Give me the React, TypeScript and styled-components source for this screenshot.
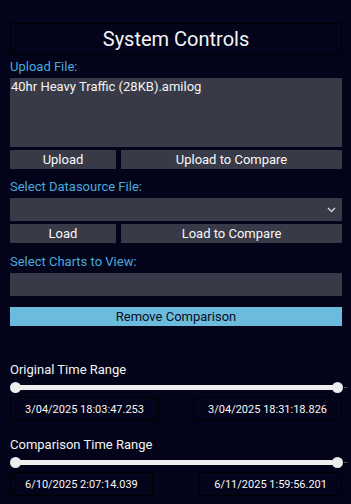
import styled, { createGlobalStyle } from "styled-components";

const GlobalStyle = createGlobalStyle`
  html, body {
    margin: 0;
    padding: 0;
    background-color: #03041a;
  }
  body {
    font-family: Roboto, "Liberation Sans", sans-serif;
    color: #f2f2f2;
  }
`;

const Panel = styled.div`
  width: 332px;
  padding: 23px 9px 0 10px;
  display: flex;
  flex-direction: column;
`;

const Title = styled.h2`
  margin: 0;
  height: 30px;
  border: 1px solid #000;
  display: flex;
  align-items: center;
  justify-content: center;
  font-size: 20px;
  font-weight: 400;
  color: #f4f4f4;
`;

const Label = styled.label<{ top?: number }>`
  display: block;
  font-size: 13px;
  line-height: 16px;
  color: #4aa9dd;
  margin-top: ${(p) => p.top ?? 4}px;
  margin-bottom: 3px;
`;

const FileBox = styled.div`
  height: 69px;
  background-color: #383a48;
  font-size: 13px;
  line-height: 16px;
  padding: 1px 1px;
  box-sizing: border-box;
  color: #f4f4f4;
`;

const ButtonRow = styled.div`
  display: grid;
  grid-template-columns: 106px 1fr;
  gap: 5px;
  margin-top: 3px;
`;

const Button = styled.button`
  height: 19px;
  padding: 0;
  border: none;
  background-color: #383a48;
  color: #f8f8f8;
  font-family: Roboto, "Liberation Sans", sans-serif;
  font-size: 13px;
  font-weight: 400;
  line-height: 19px;
`;

const SelectBox = styled.div`
  height: 23px;
  background-color: #383a48;
  display: flex;
  align-items: center;
  justify-content: flex-end;
  padding-right: 6px;
`;

const InputBox = styled.div`
  height: 23px;
  background-color: #383a48;
`;

const WideButton = styled.button`
  margin-top: 11px;
  height: 19px;
  padding: 0;
  border: none;
  background-color: #6bbcdc;
  color: #0a0c24;
  font-family: Roboto, "Liberation Sans", sans-serif;
  font-size: 13px;
  line-height: 19px;
`;

const RangeTitle = styled.div<{ top: number }>`
  margin-top: ${(p) => p.top}px;
  font-size: 13px;
  line-height: 16px;
  color: #f4f4f4;
`;

const Slider = styled.div`
  position: relative;
  margin-top: 4px;
  height: 11px;
  display: flex;
  align-items: center;
`;

const Track = styled.div`
  flex: 1;
  height: 5px;
  margin: 0 4px;
  background-color: #eeeeee;
`;

const Thumb = styled.div<{ side: "left" | "right" }>`
  position: absolute;
  top: 0;
  ${(p) => (p.side === "left" ? "left: 0;" : "right: -1px;")}
  width: 11px;
  height: 11px;
  border-radius: 50%;
  background-color: #eeeeee;
`;

const Tick = styled.div`
  position: absolute;
  right: -5px;
  top: 5px;
  width: 3px;
  height: 1px;
  background-color: #555;
`;

const TimeRow = styled.div`
  display: flex;
  justify-content: space-between;
  margin-top: 4px;
`;

const TimeBox = styled.div`
  height: 22px;
  border: 1px solid #000;
  padding: 0 14px;
  display: flex;
  align-items: center;
  font-size: 11px;
  font-weight: 400;
  color: #f8f8f8;
`;

function Chevron() {
  return (
    <svg width="9" height="6" viewBox="0 0 9 6" fill="none">
      <path d="M1 1l3.5 3.5L8 1" stroke="#d8d8d8" strokeWidth="1.4" />
    </svg>
  );
}

function RangeSlider() {
  return (
    <Slider>
      <Thumb side="left" />
      <Track />
      <Thumb side="right" />
      <Tick />
    </Slider>
  );
}

export default function App() {
  return (
    <>
      <GlobalStyle />
      <Panel>
        <Title>System Controls</Title>
        <Label top={4}>Upload File:</Label>
        <FileBox>40hr Heavy Traffic (28KB).amilog</FileBox>
        <ButtonRow>
          <Button>Upload</Button>
          <Button>Upload to Compare</Button>
        </ButtonRow>
        <Label top={10}>Select Datasource File:</Label>
        <SelectBox>
          <Chevron />
        </SelectBox>
        <ButtonRow>
          <Button>Load</Button>
          <Button>Load to Compare</Button>
        </ButtonRow>
        <Label top={11}>Select Charts to View:</Label>
        <InputBox />
        <WideButton>Remove Comparison</WideButton>
        <RangeTitle top={36}>Original Time Range</RangeTitle>
        <RangeSlider />
        <TimeRow>
          <TimeBox>3/04/2025 18:03:47.253</TimeBox>
          <TimeBox>3/04/2025 18:31:18.826</TimeBox>
        </TimeRow>
        <RangeTitle top={16}>Comparison Time Range</RangeTitle>
        <RangeSlider />
        <TimeRow>
          <TimeBox>6/10/2025 2:07:14.039</TimeBox>
          <TimeBox>6/11/2025 1:59:56.201</TimeBox>
        </TimeRow>
      </Panel>
    </>
  );
}
